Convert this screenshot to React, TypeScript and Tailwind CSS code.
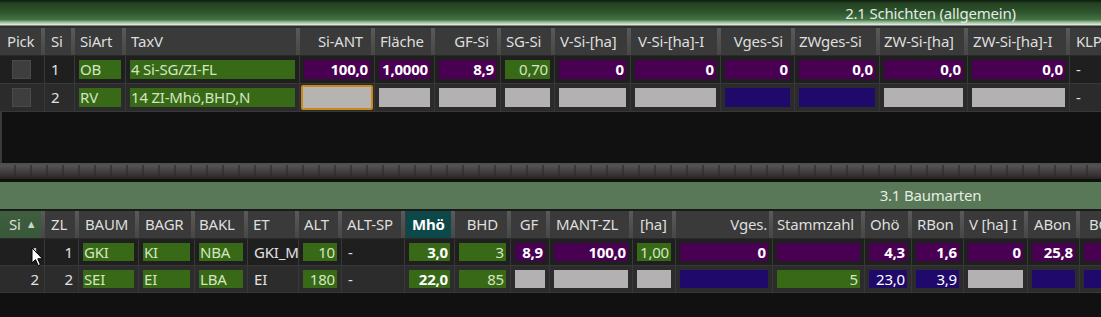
import React from 'react';

type Kind = 'g' | 'p' | 'n' | 'x' | 'o' | 't' | 'c';

interface CellDef {
  k: Kind;
  v?: string;
  r?: boolean;
  b?: boolean;
}

interface ColDef {
  w: string;
  h: string;
  hc: string;
}

const topCols: ColDef[] = [
  { w: 'w-[45px]', h: 'Pick', hc: 'pl-[7px]' },
  { w: 'w-[30px]', h: 'Si', hc: 'pl-[6px]' },
  { w: 'w-[51px]', h: 'SiArt', hc: 'pl-[5px]' },
  { w: 'w-[174px]', h: 'TaxV', hc: 'pl-[5px]' },
  { w: 'w-[75px]', h: 'Si-ANT', hc: 'justify-end pr-[8px]' },
  { w: 'w-[60px]', h: 'Fläche', hc: 'pl-[5px]' },
  { w: 'w-[66px]', h: 'GF-Si', hc: 'justify-end pr-[8px]' },
  { w: 'w-[54px]', h: 'SG-Si', hc: 'pl-[5px]' },
  { w: 'w-[76px]', h: 'V-Si-[ha]', hc: 'pl-[5px]' },
  { w: 'w-[90px]', h: 'V-Si-[ha]-I', hc: 'pl-[7px]' },
  { w: 'w-[74px]', h: 'Vges-Si', hc: 'justify-end pr-[8px]' },
  { w: 'w-[85px]', h: 'ZWges-Si', hc: 'pl-[4px]' },
  { w: 'w-[88px]', h: 'ZW-Si-[ha]', hc: 'pl-[4px]' },
  { w: 'w-[102px]', h: 'ZW-Si-[ha]-I', hc: 'pl-[5px]' },
  { w: 'w-[70px]', h: 'KLP', hc: 'pl-[6px]' },
];

const topRows: CellDef[][] = [
  [
    { k: 'c' },
    { k: 't', v: '1' },
    { k: 'g', v: 'OB' },
    { k: 'g', v: '4 Si-SG/ZI-FL' },
    { k: 'p', v: '100,0', r: true },
    { k: 'p', v: '1,0000', r: true },
    { k: 'p', v: '8,9', r: true },
    { k: 'g', v: '0,70', r: true },
    { k: 'p', v: '0', r: true },
    { k: 'p', v: '0', r: true },
    { k: 'p', v: '0', r: true },
    { k: 'p', v: '0,0', r: true },
    { k: 'p', v: '0,0', r: true },
    { k: 'p', v: '0,0', r: true },
    { k: 't', v: '-' },
  ],
  [
    { k: 'c' },
    { k: 't', v: '2' },
    { k: 'g', v: 'RV' },
    { k: 'g', v: '14 ZI-Mhö,BHD,N' },
    { k: 'o' },
    { k: 'x' },
    { k: 'x' },
    { k: 'x' },
    { k: 'x' },
    { k: 'x' },
    { k: 'n' },
    { k: 'n' },
    { k: 'x' },
    { k: 'x' },
    { k: 't', v: '-' },
  ],
];

const bottomCols: ColDef[] = [
  { w: 'w-[45px]', h: 'Si', hc: 'pl-[9px]' },
  { w: 'w-[34px]', h: 'ZL', hc: 'pl-[6px]' },
  { w: 'w-[60px]', h: 'BAUM', hc: 'pl-[6px]' },
  { w: 'w-[56px]', h: 'BAGR', hc: 'pl-[6px]' },
  { w: 'w-[53px]', h: 'BAKL', hc: 'pl-[4px]' },
  { w: 'w-[51px]', h: 'ET', hc: 'pl-[5px]' },
  { w: 'w-[43px]', h: 'ALT', hc: 'justify-end pr-[9px]' },
  { w: 'w-[63px]', h: 'ALT-SP', hc: 'pl-[5px]' },
  { w: 'w-[50px]', h: 'Mhö', hc: 'pl-[6px]' },
  { w: 'w-[56px]', h: 'BHD', hc: 'justify-end pr-[9px]' },
  { w: 'w-[39px]', h: 'GF', hc: 'justify-end pr-[8px]' },
  { w: 'w-[83px]', h: 'MANT-ZL', hc: 'pl-[6px]' },
  { w: 'w-[43px]', h: '[ha]', hc: 'pl-[7px]' },
  { w: 'w-[97px]', h: 'Vges.', hc: 'justify-end pr-[2px]' },
  { w: 'w-[92px]', h: 'Stammzahl', hc: 'pl-[4px]' },
  { w: 'w-[47px]', h: 'Ohö', hc: 'pl-[5px]' },
  { w: 'w-[52px]', h: 'RBon', hc: 'pl-[5px]' },
  { w: 'w-[64px]', h: 'V [ha] I', hc: 'pl-[5px]' },
  { w: 'w-[52px]', h: 'ABon', hc: 'pl-[6px]' },
  { w: 'w-[60px]', h: 'BO', hc: 'pl-[9px]' },
];

const bottomRows: CellDef[][] = [
  [
    { k: 't', v: '1', r: true },
    { k: 't', v: '1', r: true },
    { k: 'g', v: 'GKI' },
    { k: 'g', v: 'KI' },
    { k: 'g', v: 'NBA' },
    { k: 't', v: 'GKI_M' },
    { k: 'g', v: '10', r: true },
    { k: 't', v: '-' },
    { k: 'g', v: '3,0', r: true, b: true },
    { k: 'g', v: '3', r: true },
    { k: 'p', v: '8,9', r: true },
    { k: 'p', v: '100,0', r: true },
    { k: 'g', v: '1,00', r: true },
    { k: 'p', v: '0', r: true },
    { k: 'p' },
    { k: 'p', v: '4,3', r: true },
    { k: 'p', v: '1,6', r: true },
    { k: 'p', v: '0', r: true },
    { k: 'p', v: '25,8', r: true },
    { k: 'p' },
  ],
  [
    { k: 't', v: '2', r: true },
    { k: 't', v: '2', r: true },
    { k: 'g', v: 'SEI' },
    { k: 'g', v: 'EI' },
    { k: 'g', v: 'LBA' },
    { k: 't', v: 'EI' },
    { k: 'g', v: '180', r: true },
    { k: 't', v: '-' },
    { k: 'g', v: '22,0', r: true, b: true },
    { k: 'g', v: '85', r: true },
    { k: 'x' },
    { k: 'x' },
    { k: 'x' },
    { k: 'n' },
    { k: 'g', v: '5', r: true },
    { k: 'n', v: '23,0', r: true },
    { k: 'n', v: '3,9', r: true },
    { k: 'x' },
    { k: 'n' },
    { k: 'n' },
  ],
];

const boxColor: Record<string, string> = {
  g: 'bg-[#376917] text-[#d4e6c0]',
  p: 'bg-[#4a0052] text-white font-bold',
  n: 'bg-[#1f0a6b] text-white',
  x: 'bg-[#b3b1b1]',
};

const Cursor = () => (
  <svg
    className="absolute left-[31px] top-[8px]"
    width="13"
    height="20"
    viewBox="0 0 13 20"
  >
    <path
      d="M1 1 L1 16 L4.5 12.6 L7.2 18.6 L9.4 17.6 L6.8 11.8 L11.6 11.8 Z"
      fill="white"
      stroke="black"
      strokeWidth="1"
      strokeLinejoin="round"
    />
  </svg>
);

const Cell: React.FC<{ col: ColDef; cell: CellDef; cursor?: boolean }> = ({ col, cell, cursor }) => {
  const base = `${col.w} h-full shrink-0 border-r border-[#383838] relative`;

  if (cell.k === 'c') {
    return (
      <div className={`${base} flex items-center pl-[12px]`}>
        <div className="w-[19px] h-[19px] bg-[#3e3e3e] border border-[#4a4a4a]" />
      </div>
    );
  }

  if (cell.k === 'o') {
    return (
      <div className={`${base} p-[1px]`}>
        <div className="w-full h-full bg-[#b6b3b0] border-2 border-[#c78a1e] rounded-[2px]" />
      </div>
    );
  }

  if (cell.k === 't') {
    return (
      <div
        className={`${base} flex items-center whitespace-nowrap text-[#e2e2e2] ${
          cell.r ? 'justify-end pr-[5px]' : 'pl-[6px]'
        }`}
      >
        {cell.v}
        {cursor && <Cursor />}
      </div>
    );
  }

  return (
    <div className={`${base} p-[4px]`}>
      <div
        className={`w-full h-full flex items-center overflow-hidden whitespace-nowrap ${boxColor[cell.k]} ${
          cell.r ? 'justify-end pr-[2px]' : 'pl-[1px]'
        } ${cell.b ? 'font-bold text-white' : ''}`}
      >
        {cell.v}
      </div>
    </div>
  );
};

const HeaderRow: React.FC<{ cols: ColDef[]; sorted?: boolean }> = ({ cols, sorted }) => (
  <div className="flex h-[28px] bg-[#3a3a3a] text-[#dedede] border-b border-[#2a2a2a]">
    {cols.map((c, i) => {
      let extra = '';
      if (sorted && i === 0) extra = 'bg-[linear-gradient(to_bottom,#3f5f3f,#395739)]';
      if (sorted && c.h === 'Mhö') extra = 'font-bold text-white';
      return (
        <div key={c.h} className={`${c.w} h-full shrink-0 flex ${extra}`}>
          <div className="flex-1 h-full flex items-center min-w-0">
            <div
              className={`h-full flex items-center whitespace-nowrap ${c.hc} ${
                sorted && c.h === 'Mhö' ? 'bg-[#0c4848] pr-[4px] ml-[1px] pl-[5px]' : ''
              } flex-1`}
            >
              {c.h}
              {sorted && i === 0 && <span className="ml-[5px] text-[11px] text-[#c8d8c8]">▲</span>}
            </div>
          </div>
          <div className="w-[4px] h-full bg-[linear-gradient(to_bottom,#5a5a5a,#474747)]" />
        </div>
      );
    })}
  </div>
);

const DataRow: React.FC<{ cols: ColDef[]; cells: CellDef[]; bg: string; h: string; cursor?: boolean }> = ({
  cols,
  cells,
  bg,
  h,
  cursor,
}) => (
  <div className={`flex ${h} ${bg} border-b border-[#383838]`}>
    {cols.map((c, i) => (
      <Cell key={c.h} col={c} cell={cells[i]} cursor={cursor && i === 0} />
    ))}
  </div>
);

const App: React.FC = () => {
  return (
    <div
      className="w-[1101px] h-[317px] overflow-hidden bg-[#121212] text-[15px] tracking-[-0.2px] flex flex-col"
      style={{ fontFamily: '"Noto Sans", "Open Sans", sans-serif' }}
    >
      {/* 2.1 Schichten */}
      <div className="h-[28px] shrink-0 flex items-center bg-[linear-gradient(to_bottom,#0e1a0e_0%,#23421f_12%,#2f552f_45%,#447444_70%,#9fc09f_80%,#dde9dd_88%,#2e2e2e_94%,#2e2e2e_100%)]">
        <div className="w-[760px] shrink-0" />
        <div className="flex-1 text-center text-[#e4ece4] leading-none pb-[2px]">2.1 Schichten (allgemein)</div>
      </div>
      <div className="w-[1140px]">
        <HeaderRow cols={topCols} />
        <DataRow cols={topCols} cells={topRows[0]} bg="bg-[#1f1f1f]" h="h-[28px]" />
        <DataRow cols={topCols} cells={topRows[1]} bg="bg-[#2b2b2b]" h="h-[28px]" />
      </div>
      <div className="h-[51px] shrink-0 border-l-2 border-[#3a3a3a] bg-[#111111]" />

      {/* splitter */}
      <div className="h-[2px] shrink-0 bg-[#4e4e4e]" />
      <div className="h-[14px] shrink-0 bg-[linear-gradient(to_bottom,#555555,#3e3838_60%,#2a2222)] relative">
        <div className="h-full bg-[repeating-linear-gradient(to_right,transparent_0px,transparent_14px,#2a2a2a_14px,#2a2a2a_16px)] opacity-60" />
      </div>
      <div className="h-[3px] shrink-0 bg-[#0b140b]" />

      {/* 3.1 Baumarten */}
      <div className="h-[27px] shrink-0 flex items-center bg-[#587858]">
        <div className="w-[760px] shrink-0" />
        <div className="flex-1 text-center text-[#e4ece0] leading-none">3.1 Baumarten</div>
      </div>
      <div className="h-[2px] shrink-0 bg-[#1b1b1b]" />
      <div className="w-[1140px]">
        <HeaderRow cols={bottomCols} sorted />
        <DataRow cols={bottomCols} cells={bottomRows[0]} bg="bg-[#1f1f1f]" h="h-[27px]" cursor />
        <DataRow cols={bottomCols} cells={bottomRows[1]} bg="bg-[#2c2c2c]" h="h-[27px]" />
      </div>
      <div className="flex-1 bg-[#111111]" />
    </div>
  );
};

export default App;
